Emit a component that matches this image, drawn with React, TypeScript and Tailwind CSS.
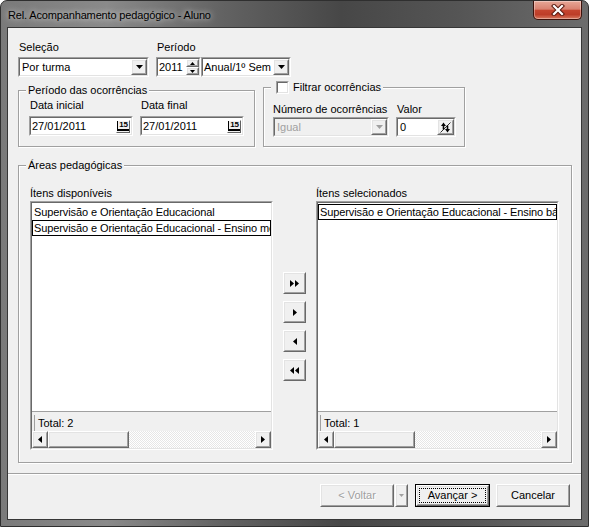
import React from "react";

const F = "font-['Liberation_Sans',Arial,sans-serif]";

type P = { className?: string; inner?: string; children?: React.ReactNode };

function Sunken({ className = "", inner = "", children }: P) {
  return (
    <div className={`shrink-0 border border-[#a0a0a0] border-r-white border-b-white ${className}`}>
      <div className={`w-full h-full border border-[#696969] border-r-[#e3e3e3] border-b-[#e3e3e3] ${inner}`}>{children}</div>
    </div>
  );
}

function Raised({ className = "", inner = "", children }: P) {
  return (
    <div className={`shrink-0 border border-white border-r-[#696969] border-b-[#696969] bg-[#f0f0f0] ${className}`}>
      <div className={`w-full h-full border border-[#e3e3e3] border-r-[#a0a0a0] border-b-[#a0a0a0] flex items-center justify-center ${inner}`}>
        {children}
      </div>
    </div>
  );
}

function Tri({ dir, color = "#000", w = 7, h = 4 }: { dir: "down" | "up" | "left" | "right"; color?: string; w?: number; h?: number }) {
  let pts = "";
  if (dir === "down") pts = `0,0 ${w},0 ${w / 2},${h}`;
  if (dir === "up") pts = `0,${h} ${w},${h} ${w / 2},0`;
  if (dir === "right") pts = `0,0 ${w},${h / 2} 0,${h}`;
  if (dir === "left") pts = `${w},0 0,${h / 2} ${w},${h}`;
  return (
    <svg width={w} height={h} viewBox={`0 0 ${w} ${h}`} className="block">
      <polygon points={pts} fill={color} />
    </svg>
  );
}

function Combo({ className = "", text, disabled = false, pl = "pl-[2px]" }: { className?: string; text: string; disabled?: boolean; pl?: string }) {
  return (
    <Sunken className={`h-[20px] ${className}`} inner={`flex items-center ${disabled ? "bg-[#f0f0f0]" : "bg-white"}`}>
      <span className={`flex-1 leading-[13px] whitespace-nowrap overflow-hidden ${pl} ${disabled ? "text-[#a0a0a0]" : ""}`}>{text}</span>
      <Raised className="w-[16px] h-[16px]">
        <Tri dir="down" color={disabled ? "#a0a0a0" : "#000"} />
      </Raised>
    </Sunken>
  );
}

function GroupBox({ className = "", title, children }: P & { title: React.ReactNode }) {
  return (
    <div className={`relative shrink-0 border border-[#a0a0a0] shadow-[inset_1px_1px_0_#fff,1px_1px_0_#fff] ${className}`}>
      <div className="absolute left-[7px] top-[-7px] bg-[#f0f0f0] px-[2px] leading-[13px] whitespace-nowrap">{title}</div>
      {children}
    </div>
  );
}

function CalIcon() {
  return (
    <div className="w-[16px] h-[16px] flex items-center justify-center">
      <div className="w-[14px] h-[13px] border border-[#606060] border-t-white border-l-white bg-[#f0f0f0] flex items-center justify-center">
        <span className="text-[8px] font-bold leading-[8px] border-b-2 border-l border-black px-[1px] tracking-[-0.3px]">15</span>
      </div>
    </div>
  );
}

function DateEdit({ value }: { value: string }) {
  return (
    <Sunken className="w-[104px] h-[20px]" inner="bg-white flex items-center">
      <span className="flex-1 pl-[1px] leading-[13px]">{value}</span>
      <CalIcon />
    </Sunken>
  );
}

function ScrollBar() {
  return (
    <div className="h-[17px] shrink-0 flex">
      <Raised className="w-[16px] h-[17px]">
        <Tri dir="left" w={4} h={7} />
      </Raised>
      <Raised className="w-[81px] h-[17px]" />
      <div className="flex-1 bg-[repeating-conic-gradient(#ffffff_0%_25%,#e6e6e6_0%_50%)] bg-[length:2px_2px]" />
      <Raised className="w-[16px] h-[17px]">
        <Tri dir="right" w={4} h={7} />
      </Raised>
    </div>
  );
}

function ListBox({ items, sel, total }: { items: string[]; sel: number; total: number }) {
  return (
    <Sunken className="w-[243px] h-[249px]" inner="flex flex-col bg-white">
      <div className="flex-1 pt-[1px] overflow-hidden">
        {items.map((t, i) => (
          <div
            key={i}
            className={`h-[16px] leading-[14px] pl-[1px] tracking-[-0.1px] whitespace-nowrap overflow-hidden border ${i === sel ? "border-black" : "border-transparent"}`}
          >
            {t}
          </div>
        ))}
      </div>
      <div className="h-[20px] shrink-0 border-t border-[#a0a0a0] bg-[#f0f0f0] pl-[2px] pt-[3px]">
        <div className="h-[16px] border-l border-[#a0a0a0] pl-[3px] pt-[2px] leading-[13px]">Total: {total}</div>
      </div>
      <ScrollBar />
    </Sunken>
  );
}

function DoubleTri({ dir }: { dir: "left" | "right" }) {
  return (
    <svg width="9" height="7" viewBox="0 0 9 7" className="block">
      {dir === "right" ? (
        <>
          <polygon points="0,0 4,3.5 0,7" fill="#000" />
          <polygon points="5,0 9,3.5 5,7" fill="#000" />
        </>
      ) : (
        <>
          <polygon points="4,0 0,3.5 4,7" fill="#000" />
          <polygon points="9,0 5,3.5 9,7" fill="#000" />
        </>
      )}
    </svg>
  );
}

function SpinIcon() {
  return (
    <svg width="11" height="11" viewBox="0 0 11 11" className="block">
      <line x1="0.5" y1="10.5" x2="10.5" y2="0.5" stroke="#303030" strokeWidth="1" />
      <polygon points="1,4 3.5,0.5 6,4" fill="#000" />
      <rect x="2.7" y="3.5" width="1.6" height="4" fill="#000" />
      <polygon points="5,7 7.5,10.5 10,7" fill="#000" />
      <rect x="6.7" y="3.5" width="1.6" height="4" fill="#000" />
    </svg>
  );
}

function CloseBtn() {
  return (
    <div className="mr-[6px] w-[49px] h-[19px] rounded-b-[5px] border border-t-0 border-[#3d120b] bg-[linear-gradient(180deg,#e7a797_0%,#d98270_45%,#c5452f_52%,#bd3d28_75%,#d7795f_100%)] shadow-[inset_0_0_0_1px_rgba(255,255,255,0.35)] flex items-center justify-center">
      <svg width="14" height="12" viewBox="0 0 14 12" className="block">
        <path d="M3 2L11 10M11 2L3 10" stroke="#5a1a10" strokeWidth="4.2" strokeLinecap="square" />
        <path d="M3 2L11 10M11 2L3 10" stroke="#ffffff" strokeWidth="2.2" strokeLinecap="square" />
      </svg>
    </div>
  );
}

function Button({ className = "", children, disabled = false }: P & { disabled?: boolean }) {
  return (
    <Raised className={`h-[23px] ${className}`}>
      <span className={`leading-[13px] ${disabled ? "text-[#a0a0a0] [text-shadow:1px_1px_0_#fff]" : ""}`}>{children}</span>
    </Raised>
  );
}

export default function App() {
  const left = ["Supervisão e Orientação Educacional", "Supervisão e Orientação Educacional - Ensino médio"];
  const right = ["Supervisão e Orientação Educacional - Ensino básico"];
  return (
    <div
      className={`${F} text-[11px] text-black w-[589px] h-[527px] flex flex-col rounded-t-[7px] border border-[#2f2f2f] overflow-hidden bg-[linear-gradient(90deg,#7a7a7a_0%,#8a8a8a_18%,#626262_38%,#474747_58%,#555555_78%,#6c6c6c_100%)]`}
    >
      <div className="h-[26px] shrink-0 flex items-start justify-between">
        <div className="pl-[7px] pt-[8px] leading-[13px] tracking-[-0.15px] [text-shadow:0_0_6px_rgba(255,255,255,0.9)]">
          Rel. Acompanhamento pedagógico - Aluno
        </div>
        <CloseBtn />
      </div>
      <div className="flex-1 px-[6px] pb-[6px] flex">
        <div className="flex-1 border border-[#363636] bg-[#f0f0f0] flex flex-col">
          {/* main panel */}
          <div className="h-[446px] shrink-0 border-b border-[#a0a0a0] shadow-[0_1px_0_#fff] pl-[10px] pt-[13px] flex flex-col">
            {/* row 1 */}
            <div className="flex gap-[7px]">
              <div className="flex flex-col gap-[3px]">
                <div className="leading-[13px] ml-[1px]">Seleção</div>
                <Combo className="w-[131px]" text="Por turma" pl="pl-[2px]" />
              </div>
              <div className="flex flex-col gap-[3px]">
                <div className="leading-[13px] ml-[1px]">Período</div>
                <div className="flex">
                  <Sunken className="w-[45px] h-[20px]" inner="bg-white flex items-center">
                    <span className="flex-1 pl-[1px] leading-[13px]">2011</span>
                    <div className="flex flex-col w-[13px] h-full">
                      <Raised className="h-[8px]">
                        <Tri dir="up" w={5} h={3} />
                      </Raised>
                      <Raised className="h-[8px]">
                        <Tri dir="down" w={5} h={3} />
                      </Raised>
                    </div>
                  </Sunken>
                  <Combo className="w-[90px]" text="Anual/1º Sem" pl="pl-[1px]" />
                </div>
              </div>
            </div>
            {/* row 2 */}
            <div className="flex items-start gap-[8px] mt-[10px]">
              <GroupBox className="w-[237px] h-[57px] mt-[3px] pl-[10px] pt-[8px]" title="Período das ocorrências">
                <div className="flex gap-[7px]">
                  <div className="flex flex-col gap-[4px]">
                    <div className="leading-[13px] ml-[1px]">Data inicial</div>
                    <DateEdit value="27/01/2011" />
                  </div>
                  <div className="flex flex-col gap-[4px]">
                    <div className="leading-[13px] ml-[1px]">Data final</div>
                    <DateEdit value="27/01/2011" />
                  </div>
                </div>
              </GroupBox>
              <div className="relative shrink-0 w-[202px] h-[60px] border border-[#a0a0a0] shadow-[inset_1px_1px_0_#fff,1px_1px_0_#fff] pl-[9px] pt-[15px]">
                <div className="absolute left-[7px] top-[-7px] h-[13px] bg-[#f0f0f0] pl-[5px] pr-[2px] flex items-center gap-[4px] whitespace-nowrap">
                  <Sunken className="w-[13px] h-[13px]" inner="bg-white" />
                  <span className="leading-[13px]">Filtrar ocorrências</span>
                </div>
                <div className="flex gap-[7px]">
                  <div className="flex flex-col gap-[1px]">
                    <div className="leading-[13px]">Número de ocorrências</div>
                    <Combo className="w-[116px]" text="Igual" disabled pl="pl-[2px]" />
                  </div>
                  <div className="flex flex-col gap-[1px]">
                    <div className="leading-[13px] ml-[1px]">Valor</div>
                    <Sunken className="w-[60px] h-[20px]" inner="bg-white flex items-center">
                      <span className="flex-1 pl-[2px] leading-[13px]">0</span>
                      <Raised className="w-[17px] h-[16px]">
                        <SpinIcon />
                      </Raised>
                    </Sunken>
                  </div>
                </div>
              </div>
            </div>
            {/* areas */}
            <GroupBox className="w-[554px] h-[298px] mt-[18px] pl-[11px] pt-[21px]" title="Áreas pedagógicas">
              <div className="flex">
                <div className="flex flex-col gap-[1px]">
                  <div className="leading-[13px]">Ítens disponíveis</div>
                  <ListBox items={left} sel={1} total={2} />
                </div>
                <div className="w-[43px] shrink-0 pl-[10px] pt-[85px] flex flex-col gap-[7px]">
                  <Raised className="w-[23px] h-[22px]">
                    <DoubleTri dir="right" />
                  </Raised>
                  <Raised className="w-[23px] h-[22px]">
                    <Tri dir="right" w={4} h={7} />
                  </Raised>
                  <Raised className="w-[23px] h-[22px]">
                    <Tri dir="left" w={4} h={7} />
                  </Raised>
                  <Raised className="w-[23px] h-[22px]">
                    <DoubleTri dir="left" />
                  </Raised>
                </div>
                <div className="flex flex-col gap-[1px]">
                  <div className="leading-[13px]">Ítens selecionados</div>
                  <ListBox items={right} sel={0} total={1} />
                </div>
              </div>
            </GroupBox>
          </div>
          {/* bottom buttons */}
          <div className="flex-1 flex justify-end items-start pr-[11px] pt-[10px]">
            <Button className="w-[74px]" disabled>
              &lt; Voltar
            </Button>
            <Raised className="w-[13px] h-[23px] ml-[1px]">
              <Tri dir="down" w={5} h={3} color="#a0a0a0" />
            </Raised>
            <div className="ml-[7px] w-[75px] h-[23px] border border-black shrink-0">
              <Raised className="w-full h-full" inner="p-[1px]">
                <div className="w-full h-full border border-dotted border-black flex items-center justify-center leading-[13px]">Avançar &gt;</div>
              </Raised>
            </div>
            <Button className="w-[74px] ml-[6px]">Cancelar</Button>
          </div>
        </div>
      </div>
    </div>
  );
}
